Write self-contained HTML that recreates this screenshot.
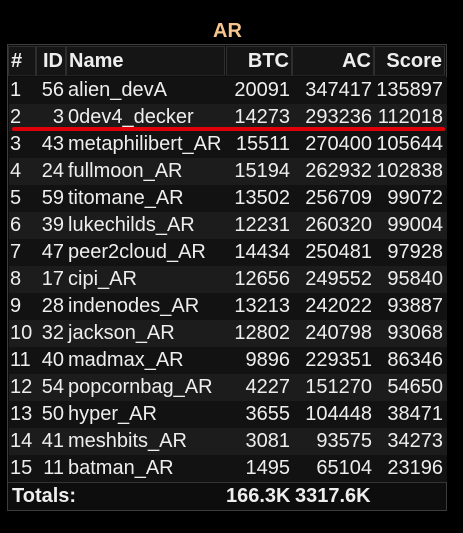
<!DOCTYPE html>
<html><head><style>
body{margin:0;background:#000;width:463px;height:533px;overflow:hidden;font-family:"Liberation Sans",sans-serif;color:#eee;position:relative}
.t{position:absolute;left:213px;top:20px;font-weight:bold;font-size:20px;color:#f6c58d}
.tbl{position:absolute;left:7px;top:44px;width:440px;height:467px;border:1px solid #3c3c3c;background:#0d0d0d;box-sizing:border-box}
.r{position:absolute;left:2px;width:435px;height:27px;font-size:20px;line-height:27px}
.c{position:absolute;top:0;height:100%;white-space:nowrap;box-sizing:border-box;padding:0 2px}
.h .c{background:#151515;border:1px solid #2e2e2e;border-bottom-color:#222;font-weight:bold;line-height:28px}
.o{background:#121212}.e{background:#1c1c1c}
.R{text-align:right}
</style></head><body>
<div class="t">AR</div>
<div class="tbl"></div>
<div id="w"></div>
<div style="position:absolute;left:12px;top:127px;width:433px;height:4px;background:#e0000a;border-radius:2px"></div>
<script>
var cols=[[10,26,0],[38,28,1],[68,157,0],[228,64,1],[294,80,1],[376,69,1]];
var data=[["#","ID","Name","BTC","AC","Score"],
["1","56","alien_devA","20091","347417","135897"],
["2","3","0dev4_decker","14273","293236","112018"],
["3","43","metaphilibert_AR","15511","270400","105644"],
["4","24","fullmoon_AR","15194","262932","102838"],
["5","59","titomane_AR","13502","256709","99072"],
["6","39","lukechilds_AR","12231","260320","99004"],
["7","47","peer2cloud_AR","14434","250481","97928"],
["8","17","cipi_AR","12656","249552","95840"],
["9","28","indenodes_AR","13213","242022","93887"],
["10","32","jackson_AR","12802","240798","93068"],
["11","40","madmax_AR","9896","229351","86346"],
["12","54","popcornbag_AR","4227","151270","54650"],
["13","50","hyper_AR","3655","104448","38471"],
["14","41","meshbits_AR","3081","93575","34273"],
["15","11","batman_AR","1495","65104","23196"]];
var h="";
data.forEach(function(r,i){
 var top=i==0?46:77+(i-1)*27, cls=i==0?"h":(i%2?"o":"e");
 h+='<div class="r '+(i==0?"h":"")+'" style="top:'+top+'px;left:0;width:463px;height:'+(i==0?30:27)+'px">';
 if(i>0)h+='<div class="'+cls+'" style="position:absolute;left:9px;width:438px;height:27px"></div>';
 r.forEach(function(t,j){var c=cols[j];var right=(i==0&&j>=3)||c[2];
  h+='<div class="c '+(right?"R":"")+'" style="left:'+(c[0]-2)+'px;width:'+(c[1]+2)+'px">'+t+'</div>';});
 h+='</div>';});
h+='<div style="position:absolute;left:8px;top:482px;width:438px;height:28px;border-top:1px solid #333;font-weight:bold;font-size:20px;line-height:27px">';
h+='<span style="position:absolute;left:4px">Totals:</span><span style="position:absolute;left:218px">166.3K</span><span style="position:absolute;left:287px">3317.6K</span></div>';
document.getElementById("w").innerHTML=h;
</script>
</body></html>
